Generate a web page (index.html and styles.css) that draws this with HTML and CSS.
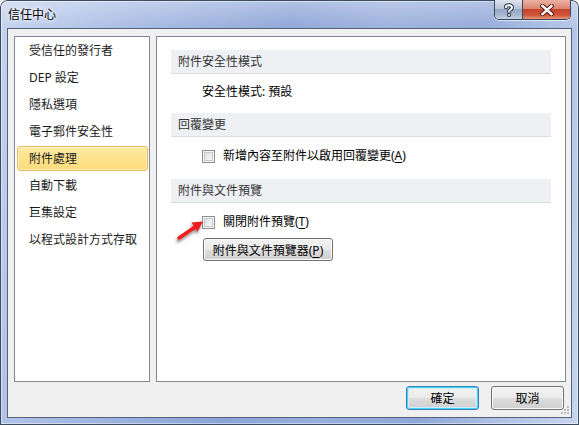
FILE: index.html
```html
<!DOCTYPE html>
<html lang="zh-Hant">
<head>
  <meta charset="UTF-8" />
  <title>信任中心</title>
  <meta name="viewport" content="width=device-width, initial-scale=1.0" />
  <link rel="stylesheet" href="styles.css">
</head>
<body>

<div class="window">
  <div class="titlebar">
    <span class="title">信任中心</span>
    <div class="caption-buttons">
      <span class="cap help">
        <svg width="12" height="14" viewBox="0 0 12 14">
          <path d="M3 4.2 C3 1.6 9 1.4 9 4.4 C9 6.6 6 6.6 6 8.8" fill="none" stroke="#28354a" stroke-width="4" stroke-linecap="round"/>
          <path d="M3 4.2 C3 1.6 9 1.4 9 4.4 C9 6.6 6 6.6 6 8.8" fill="none" stroke="#fff" stroke-width="2" stroke-linecap="round"/>
          <circle cx="6" cy="12" r="2" fill="#28354a"/>
          <circle cx="6" cy="12" r="1" fill="#fff"/>
        </svg>
      </span>
      <span class="cap close">
        <svg width="14" height="12" viewBox="0 0 14 12">
          <path d="M2.5 2 L11.5 10 M11.5 2 L2.5 10" stroke="#5a1a10" stroke-width="4.4" stroke-linecap="square"/>
          <path d="M2.5 2 L11.5 10 M11.5 2 L2.5 10" stroke="#fff" stroke-width="2.4" stroke-linecap="square"/>
        </svg>
      </span>
    </div>
  </div>

  <div class="client">
    <div class="panes">
      <!-- category list -->
      <ul class="nav">
        <li>受信任的發行者</li>
        <li>DEP 設定</li>
        <li>隱私選項</li>
        <li>電子郵件安全性</li>
        <li class="selected">附件處理</li>
        <li>自動下載</li>
        <li>巨集設定</li>
        <li>以程式設計方式存取</li>
      </ul>

      <!-- settings for the selected category -->
      <div class="content">
        <div class="band">附件安全性模式</div>
        <div class="group">
          <div class="row">安全性模式: 預設</div>
        </div>

        <div class="band">回覆變更</div>
        <div class="group">
          <label class="row"><span class="checkbox"></span>新增內容至附件以啟用回覆變更(<u>A</u>)</label>
        </div>

        <div class="band">附件與文件預覽</div>
        <div class="group">
          <label class="row"><span class="checkbox"></span>關閉附件預覽(<u>T</u>)</label>
          <button class="btn preview-btn">附件與文件預覽器(<u>P</u>)</button>
        </div>
      </div>
    </div>

    <div class="footer">
      <button class="btn default">確定</button>
      <button class="btn">取消</button>
    </div>

    <svg class="grip" width="9" height="9" viewBox="0 0 9 9">
      <g fill="#b8bcc4">
        <rect x="6" y="0" width="2" height="2"/>
        <rect x="3" y="3" width="2" height="2"/>
        <rect x="6" y="3" width="2" height="2"/>
        <rect x="0" y="6" width="2" height="2"/>
        <rect x="3" y="6" width="2" height="2"/>
        <rect x="6" y="6" width="2" height="2"/>
      </g>
    </svg>
  </div>

  <!-- pointer next to the preview checkbox -->
  <svg class="arrow" width="34" height="30" viewBox="0 0 34 30">
    <defs>
      <filter id="shadow" x="-40%" y="-40%" width="180%" height="190%">
        <feDropShadow dx="-1" dy="2.5" stdDeviation="1.5" flood-color="#000" flood-opacity="0.5"/>
      </filter>
    </defs>
    <g filter="url(#shadow)">
      <path d="M5 22 L21 11" stroke="#ee1c1c" stroke-width="3.4" stroke-linecap="round"/>
      <path d="M29 5.5 L17.4 6.6 L23.6 15.6 Z" fill="#ee1c1c"/>
    </g>
  </svg>
</div>

</body>
</html>
```

FILE: styles.css
```css
:root {
  --list-border: #828790;
  --band-bg: #eef0f4;
  --band-line: #dadde4;
  --text: #1b1b1b;
}

body {
  margin: 0;
  font-family: 'Noto Sans', 'Noto Sans CJK TC', sans-serif;
  font-size: 12px;
  color: var(--text);
  background: #fff;
}

.window {
  position: relative;
  width: 579px;
  height: 425px;
  box-sizing: border-box;
  padding: 0 7px 7px;
  border-radius: 7px 7px 0 0;
  background:
    linear-gradient(180deg, rgba(255,255,255,0.35) 0, rgba(255,255,255,0.05) 28px, rgba(0,0,0,0) 100%),
    linear-gradient(100deg, #c2d1ee 0%, #a8bce4 18%, #9bb1de 30%, #8ba3d6 45%, #98aedc 60%, #8fa7d8 75%, #b3c5e8 90%, #c8d5ee 100%);
  box-shadow: inset 0 0 0 1px #3f4b61, inset 0 0 0 2px rgba(255,255,255,0.45);
  overflow: hidden;
}

/* title bar */
.titlebar {
  display: flex;
  justify-content: space-between;
  align-items: flex-start;
  height: 28px;
}

.title {
  padding: 7px 0 0 1px;
  line-height: 16px;
  color: #000;
  text-shadow: 0 0 6px #fff, 0 0 3px #fff;
}

.caption-buttons {
  display: flex;
  height: 19px;
  margin-right: 1px;
  border: 1px solid #3b465c;
  border-top: none;
  border-radius: 0 0 5px 5px;
  overflow: hidden;
  box-shadow: 0 1px 0 rgba(255,255,255,0.6);
}

.cap {
  display: flex;
  align-items: center;
  justify-content: center;
  height: 19px;
}

.help {
  width: 27px;
  border-right: 1px solid #3b465c;
  background: linear-gradient(180deg, #dfe5ef 0%, #b9c5d8 45%, #97a7c1 50%, #a9b8cf 80%, #c9d4e4 100%);
}

.close {
  width: 47px;
  background: linear-gradient(180deg, #ebb0a3 0%, #dc8672 45%, #c7432c 50%, #cf5639 80%, #e69a7e 100%);
}

/* client area */
.client {
  position: relative;
  height: 390px;
  box-sizing: border-box;
  padding: 7px 5px 0 6px;
  background: #f0f0f0;
  border: 1px solid #56627a;
}

.panes {
  display: flex;
  gap: 6px;
  height: 346px;
}

.nav {
  width: 136px;
  box-sizing: border-box;
  margin: 0;
  padding: 1px 0 0;
  list-style: none;
  background: #fff;
  border: 1px solid var(--list-border);
}

.nav li {
  height: 25px;
  box-sizing: border-box;
  margin: 0 1px 2px 2px;
  padding-left: 11px;
  line-height: 23px;
  border: 1px solid transparent;
  border-radius: 3px;
  white-space: nowrap;
}

.nav li.selected {
  border-color: #e1bb5c;
  background: linear-gradient(180deg, #fee9a4 0%, #fde28d 50%, #fddc7c 100%);
  box-shadow: inset 0 0 0 1px rgba(255,255,255,0.45);
}

.content {
  flex: 1;
  box-sizing: border-box;
  padding-top: 13px;
  background: #fff;
  border: 1px solid var(--list-border);
}

.band {
  height: 23px;
  margin: 0 14px;
  padding-left: 7px;
  line-height: 23px;
  color: #333;
  background: var(--band-bg);
  border-bottom: 1px solid var(--band-line);
}

.group {
  margin: 0 14px;
  padding: 10px 0 13px 31px;
}

.group + .band + .group {
  padding: 11px 0 15px 31px;
}

.row {
  display: flex;
  align-items: center;
  height: 16px;
  line-height: 16px;
  color: #000;
}

.row u {
  text-underline-offset: 2px;
}

.checkbox {
  width: 13px;
  height: 13px;
  box-sizing: border-box;
  margin-right: 8px;
  border: 1px solid #8e8f8f;
  background: linear-gradient(135deg, #d9d9d9 0%, #ededed 55%, #fbfbfb 100%);
  box-shadow: inset 0 0 0 1px #f4f4f4, inset 0 0 0 2px #c9c9c9;
}

/* push buttons */
.btn {
  height: 24px;
  padding: 0;
  font: inherit;
  color: #000;
  border: 1px solid #707070;
  border-radius: 3px;
  background: linear-gradient(180deg, #f2f2f2 0%, #ebebeb 48%, #dddddd 52%, #cfcfcf 100%);
  box-shadow: inset 0 0 0 1px #fbfbfb;
}

.btn u {
  text-underline-offset: 2px;
}

.preview-btn {
  display: block;
  width: 130px;
  height: 23px;
  margin: 8px 0 0 1px;
}

.footer {
  display: flex;
  justify-content: flex-end;
  gap: 12px;
  margin-top: 4px;
  padding-right: 2px;
}

.footer .btn {
  width: 73px;
}

.btn.default {
  border-color: #3c7fb1;
  box-shadow: inset 0 0 0 1px #48d3fb, inset 0 0 0 2px #c9eefd;
}

.grip {
  position: absolute;
  right: 1px;
  bottom: 2px;
}

.arrow {
  position: absolute;
  left: 174px;
  top: 216px;
}
```
